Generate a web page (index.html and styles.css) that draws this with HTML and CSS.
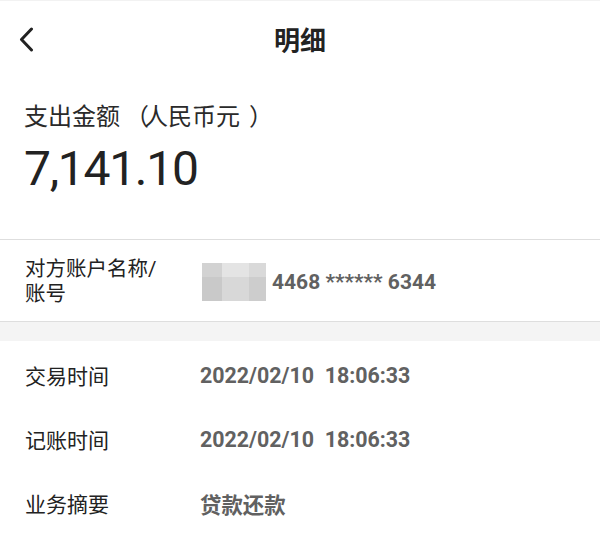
FILE: index.html
```html
<!DOCTYPE html>
<html lang="zh-CN">
<head>
<meta charset="utf-8">
<title>明细</title>
<link rel="stylesheet" href="styles.css">
</head>
<body>
<div class="page">
  <header class="topbar">
    <span class="back">
      <svg width="15" height="25" viewBox="0 0 15 25"><polyline points="12.5,2 2.5,12.5 12.5,23" fill="none" stroke="#222" stroke-width="3" stroke-linecap="round" stroke-linejoin="round"/></svg>
    </span>
    <h1 class="title">明细</h1>
  </header>

  <section class="amount">
    <div class="amount-label">支出金额<span class="po">（</span>人民币元<span class="pc">）</span></div>
    <div class="amount-value">7,141.10</div>
  </section>

  <section class="account">
    <div class="label account-label">对方账户名称/<br>账号</div>
    <div class="account-value">
      <span class="mosaic">
        <i class="m1"></i><i class="m2"></i><i class="m3"></i>
        <i class="m4"></i><i class="m5"></i><i class="m6"></i>
      </span>
      <span class="value">4468 ****** 6344</span>
    </div>
  </section>

  <div class="band"></div>

  <section class="details">
    <div class="row"><span class="label">交易时间</span><span class="value">2022/02/10&nbsp; 18:06:33</span></div>
    <div class="row"><span class="label">记账时间</span><span class="value">2022/02/10&nbsp; 18:06:33</span></div>
    <div class="row"><span class="label">业务摘要</span><span class="value">贷款还款</span></div>
  </section>
</div>
</body>
</html>
```

FILE: styles.css
```css
* { box-sizing: border-box; margin: 0; padding: 0; }
html, body { background: #fff; }
body {
  font-family: Roboto, "Noto Sans CJK SC", "Noto Sans", sans-serif;
  color: #222;
  width: 600px;
  height: 534px;
  overflow: hidden;
}
.page { width: 600px; }

.topbar {
  position: relative;
  height: 80px;
  display: flex;
  align-items: center;
  justify-content: center;
  border-top: 1px solid #f2f2f2;
}
.back {
  position: absolute;
  left: 19px;
  top: 26px;
  width: 15px;
  height: 25px;
  display: flex;
}
.title {
  font-size: 26px;
  font-weight: 700;
  color: #222;
  line-height: 32px;
}

.amount {
  padding: 21px 24px 0;
  height: 159px;
}
.amount-label {
  font-size: 24px;
  line-height: 32px;
  color: #2a2a2a;
  white-space: nowrap;
}
.po, .pc {
  display: inline-block;
  width: 24px;
  white-space: nowrap;
}
.po { padding-left: 5px; letter-spacing: -5px; }
.pc { padding-left: 9px; letter-spacing: -9px; }
.amount-value {
  margin-top: 8px;
  font-size: 48px;
  line-height: 56px;
  letter-spacing: -1.3px;
  color: #222;
}

.account {
  display: flex;
  align-items: center;
  border-top: 1px solid #dedede;
  border-bottom: 1px solid #dedede;
  height: 83px;
  padding-left: 25px;
}
.label {
  font-size: 21px;
  color: #222;
}
.account-label {
  font-size: 20.5px;
  width: 177px;
  line-height: 25px;
  padding-top: 2px;
}
.account-value {
  display: flex;
  align-items: center;
  padding-top: 3px;
}
.mosaic {
  display: grid;
  grid-template-columns: 20px 27px 17px;
  grid-template-rows: 14px 24px;
  width: 64px;
  height: 38px;
  margin-right: 6px;
}
.mosaic i { display: block; }
.m1 { background: #d2d2d2; }
.m2 { background: #e4e4e4; }
.m3 { background: #d9d9d9; }
.m4 { background: #c9c9c9; }
.m5 { background: #d8d8d8; }
.m6 { background: #cdcdcd; }

.value {
  font-size: 21.4px;
  font-weight: 700;
  color: #616161;
}
.account-value .value { font-size: 21px; }

.band {
  height: 19px;
  background: #f4f4f4;
}

.details {
  padding-top: 2px;
}
.row {
  display: flex;
  align-items: center;
  height: 64px;
  padding-left: 25px;
}
.row .label { width: 175px; }
```
